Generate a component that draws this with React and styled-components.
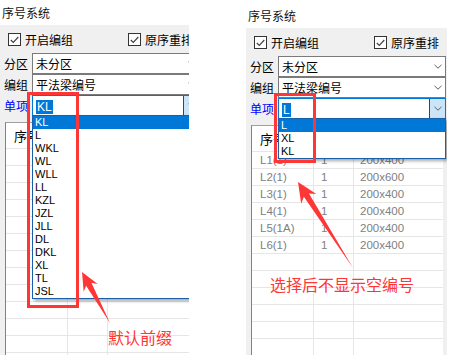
import React from 'react';
import styled, { createGlobalStyle } from 'styled-components';

const GlobalStyle = createGlobalStyle`
  html, body { margin: 0; padding: 0; background: #fff; }
  body { font-family: "Noto Sans CJK SC", "Liberation Sans", sans-serif; }
`;

const RED = '#ff3636';

const Page = styled.div`
  position: relative;
  width: 460px;
  height: 355px;
  overflow: hidden;
  display: flex;
  align-items: stretch;
`;

// one cropped screenshot of the dialog
const Shot = styled.div`
  flex: none;
  width: ${p => p.$width}px;
  margin-left: ${p => p.$offset}px;
  padding-top: ${p => p.$top}px;
  box-sizing: border-box;
  display: flex;
  flex-direction: column;
  overflow: hidden;
`;

const Title = styled.div`
  height: 20px;
  line-height: 20px;
  font-size: 12px;
  color: #111;
  padding-left: 2px;
  margin-bottom: 2px;
  white-space: nowrap;
`;

const Panel = styled.div`
  flex: 1;
  width: 201px;
  min-width: 201px;
  background: #f0f0f0;
  padding-top: 4px;
  display: flex;
  flex-direction: column;
  overflow: hidden;
`;

const CheckRow = styled.div`
  display: flex;
  align-items: center;
  height: 21px;
  padding-left: 8px;
`;

const CheckItem = styled.label`
  display: flex;
  align-items: center;
  gap: 4px;
  width: ${p => p.$width || 'auto'};
  font-size: 12px;
  color: #000;
  white-space: nowrap;
`;

const Box = styled.span`
  width: 11px;
  height: 11px;
  border: 1px solid #333;
  background: #fff;
  display: flex;
  align-items: center;
  justify-content: center;
`;

const Fields = styled.div`
  display: flex;
  flex-direction: column;
  margin-top: 3px;
`;

const FieldRow = styled.div`
  display: flex;
  align-items: center;
  height: 21px;
`;

const Label = styled.span`
  width: 28px;
  padding-left: 4px;
  font-size: 12px;
  color: ${p => (p.$link ? '#0000ff' : '#000')};
  white-space: nowrap;
`;

const Combo = styled.div`
  position: relative;
  width: 168px;
  height: 21px;
  box-sizing: border-box;
  border: 1px solid ${p => (p.$active ? '#0078d7' : '#7a7a7a')};
  background: #fff;
  display: flex;
  align-items: center;
`;

const ComboText = styled.span`
  flex: 1;
  padding-left: 3px;
  font-size: 12px;
  color: #000;
  white-space: nowrap;
`;

const Selected = styled.span`
  background: #0078d7;
  color: #fff;
  font-family: "Liberation Sans", sans-serif;
  padding: 0 1px;
`;

const DropBtn = styled.span`
  width: 16px;
  height: 100%;
  box-sizing: border-box;
  display: flex;
  align-items: center;
  justify-content: center;
  background: ${p => (p.$active ? '#cce4f7' : 'transparent')};
  border-left: 1px solid ${p => (p.$active ? '#005499' : 'transparent')};
`;

const List = styled.ul`
  position: absolute;
  top: 100%;
  left: -1px;
  right: -1px;
  margin: 0;
  padding: 0;
  list-style: none;
  background: #fff;
  border: 1px solid #1a5fa8;
  box-shadow: 2px 2px 3px rgba(0, 0, 0, 0.35);
  z-index: 5;
`;

const Item = styled.li`
  height: 13px;
  line-height: 13px;
  padding-left: 2px;
  font-family: "Liberation Sans", sans-serif;
  font-size: 11px;
  color: ${p => (p.$on ? '#fff' : '#000')};
  background: ${p => (p.$on ? '#0078d7' : 'transparent')};
`;

const Table = styled.div`
  flex: 1;
  margin: 6px 4px 0 5px;
  background: #fff;
  border-top: 1px solid #a0a0a0;
  border-left: 1px solid #828282;
  display: grid;
  grid-template-columns: 62px 40px 90px;
  grid-auto-rows: 17px;
  grid-template-rows: 26px;
  overflow: hidden;
`;

const Cell = styled.div`
  box-sizing: border-box;
  border-right: 1px solid #e6e6e6;
  border-bottom: 1px solid #e6e6e6;
  padding-left: ${p => p.$pad || 7}px;
  display: flex;
  align-items: center;
  font-family: ${p => (p.$head ? '"Noto Sans CJK SC", sans-serif' : '"Liberation Sans", sans-serif')};
  font-size: ${p => (p.$head ? 13 : 11.5)}px;
  color: ${p => (p.$head ? '#000' : '#808080')};
  white-space: nowrap;
`;

const Overlay = styled.svg`
  position: absolute;
  left: 0;
  top: 0;
  pointer-events: none;
  z-index: 10;
`;

const Note = styled.div`
  position: absolute;
  left: ${p => p.$x}px;
  top: ${p => p.$y}px;
  font-size: 16px;
  line-height: 20px;
  color: ${RED};
  white-space: nowrap;
  z-index: 10;
`;

const Check = () => (
  <svg width="9" height="8" viewBox="0 0 9 8">
    <polyline points="0.8,4 3.3,6.5 8.3,1" fill="none" stroke="#444" strokeWidth="1.2" />
  </svg>
);

const Chevron = () => (
  <svg width="8" height="5" viewBox="0 0 8 5">
    <polyline points="0.5,0.8 4,4.2 7.5,0.8" fill="none" stroke="#606060" strokeWidth="1" />
  </svg>
);

function arrow(tip, tail, headLen, headHalf, neckHalf) {
  const dx = tip[0] - tail[0];
  const dy = tip[1] - tail[1];
  const len = Math.hypot(dx, dy);
  const ux = dx / len, uy = dy / len;
  const nx = -uy, ny = ux;
  const bx = tip[0] - ux * headLen, by = tip[1] - uy * headLen;
  const kx = tip[0] - ux * headLen * 0.78, ky = tip[1] - uy * headLen * 0.78;
  const pts = [
    tip,
    [bx + nx * headHalf, by + ny * headHalf],
    [kx + nx * neckHalf, ky + ny * neckHalf],
    tail,
    [kx - nx * neckHalf, ky - ny * neckHalf],
    [bx - nx * headHalf, by - ny * headHalf],
  ];
  return pts.map(p => p.join(',')).join(' ');
}

const leftItems = ['KL', 'L', 'WKL', 'WL', 'WLL', 'LL', 'KZL', 'JZL', 'JLL', 'DL', 'DKL', 'XL', 'TL', 'JSL'];
const rightItems = ['L', 'XL', 'KL'];

const rows = [
  ['L1(1)', '1', '200x400'],
  ['L2(1)', '1', '200x600'],
  ['L3(1)', '1', '200x400'],
  ['L4(1)', '1', '200x400'],
  ['L5(1A)', '1', '200x400'],
  ['L6(1)', '1', '200x400'],
];

function Dialog({ prefix, items, data }) {
  const filled = [...data];
  while (filled.length < 14) filled.push(['', '', '']);
  return (
    <Panel>
      <CheckRow>
        <CheckItem $width="120px"><Box><Check /></Box>开启编组</CheckItem>
        <CheckItem><Box><Check /></Box>原序重排</CheckItem>
      </CheckRow>
      <Fields>
        <FieldRow>
          <Label>分区</Label>
          <Combo><ComboText>未分区</ComboText><DropBtn><Chevron /></DropBtn></Combo>
        </FieldRow>
        <FieldRow>
          <Label>编组</Label>
          <Combo><ComboText>平法梁编号</ComboText><DropBtn><Chevron /></DropBtn></Combo>
        </FieldRow>
        <FieldRow>
          <Label $link>单项</Label>
          <Combo $active>
            <ComboText><Selected>{prefix}</Selected></ComboText>
            <DropBtn $active><Chevron /></DropBtn>
            <List>
              {items.map((it, i) => (
                <Item key={it} $on={i === 0}>{it}</Item>
              ))}
            </List>
          </Combo>
        </FieldRow>
      </Fields>
      <Table>
        <Cell $head $pad={8}>序号</Cell>
        <Cell $head />
        <Cell $head />
        {filled.map((r, i) => (
          <React.Fragment key={i}>
            <Cell $pad={8}>{r[0]}</Cell>
            <Cell>{r[1]}</Cell>
            <Cell $pad={6}>{r[2]}</Cell>
          </React.Fragment>
        ))}
      </Table>
    </Panel>
  );
}

export default function App() {
  return (
    <>
      <GlobalStyle />
      <Page>
        <Shot $width={189} $offset={0} $top={3}>
          <Title>序号系统</Title>
          <Dialog prefix="KL" items={leftItems} data={[]} />
        </Shot>
        <Shot $width={201} $offset={57} $top={6}>
          <Title>序号系统</Title>
          <Dialog prefix="L" items={rightItems} data={rows} />
        </Shot>

        <Overlay width="460" height="355" viewBox="0 0 460 355">
          <rect x="28.5" y="93.5" width="49" height="213" fill="none" stroke={RED} strokeWidth="3" />
          <rect x="275.5" y="94.5" width="39" height="67" fill="none" stroke={RED} strokeWidth="3" />
          <polygon points={arrow([82, 272], [110, 323], 18, 8, 3)} fill={RED} />
          <polygon points={arrow([298, 182], [353, 268], 20, 9, 3)} fill={RED} />
        </Overlay>
        <Note $x={108} $y={327}>默认前缀</Note>
        <Note $x={270} $y={274}>选择后不显示空编号</Note>
      </Page>
    </>
  );
}
